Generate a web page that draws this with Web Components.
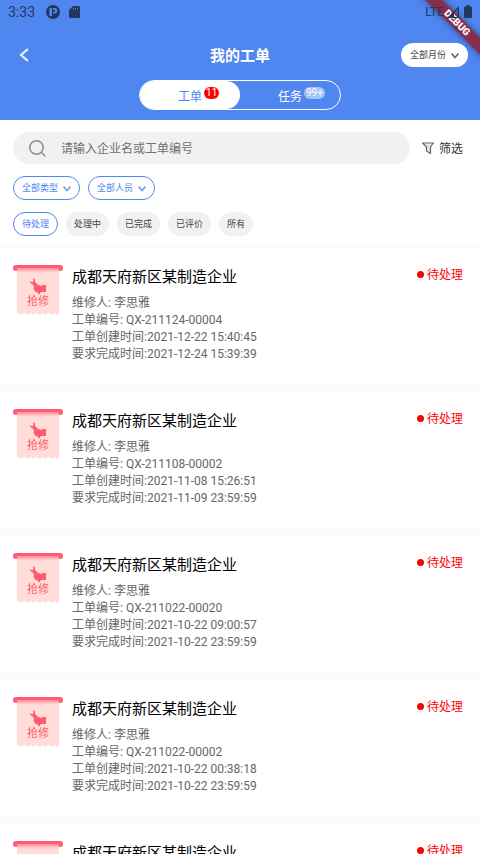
<!DOCTYPE html>
<html lang="zh-CN">
<head>
<meta charset="utf-8">
<meta name="viewport" content="width=device-width, initial-scale=1">
<title>我的工单</title>
<style>
  html, body { height: 100%; margin: 0; }
  body {
    background: #fff;
    color: #333;
    font: 12px/17px Roboto, "Noto Sans CJK SC", sans-serif;
    overflow: hidden;
    --blue: #5086f0;
  }
</style>
</head>
<body>
<orders-app></orders-app>

<script>
  function define(name, html, setup) {
    const template = document.createElement('template');
    template.innerHTML = html;
    customElements.define(name, class extends HTMLElement {
      connectedCallback() {
        if (this.shadowRoot) return;
        this.attachShadow({ mode: 'open' }).append(template.content.cloneNode(true));
        if (setup) setup(this, this.shadowRoot);
      }
    });
  }

  define('status-bar', `
    <style>
      :host { display: flex; position: relative; z-index: 2; align-items: center; height: 24px; padding: 0 8px; color: #233764; font-size: 14px; }
      .time { margin-right: 11px; }
      svg { display: block; fill: currentColor; }
      .sd { margin-left: 9px; }
      .net { margin-left: auto; font-size: 12px; }
      .signal { margin-left: 3px; }
      .battery { margin-left: 5px; }
    </style>
    <span class="time">3:33</span>
    <svg width="14" height="14" viewBox="0 0 14 14"><path fill-rule="evenodd" d="M7 0a7 7 0 1 1 0 14A7 7 0 0 1 7 0ZM3.500 3v8h2.500V3Zm3.500 0v2h2v2H7v1.500h1.500a2.750 2.750 0 0 0 0-5.500Z"/></svg>
    <svg class="sd" width="11" height="14" viewBox="0 0 11 14"><path fill-rule="evenodd" d="M4 1h6q1 0 1 1v10q0 1-1 1H1q-1 0-1-1V5Z"/><path d="M4.500 3v1.500M6.500 3v1.500M8.500 3v1.500" stroke="#5f7db8" stroke-width="1"/></svg>
    <span class="net">LTE</span>
    <svg class="signal" width="12" height="12" viewBox="0 0 12 12"><path fill-rule="evenodd" d="M0 12 12 0v12ZM7 7v4h3.500V3.500Z"/></svg>
    <svg class="battery" width="8" height="14" viewBox="0 0 8 14"><path d="M2.500 0h3v1.500H7q1 0 1 1V12q0 1-1 1H1q-1 0-1-1V2.500q0-1 1-1h1.500Z"/></svg>
  `);

  define('debug-banner', `
    <style>
      :host { position: absolute; top: 0; right: 0; width: 80px; height: 80px; overflow: hidden; pointer-events: none; }
      div {
        position: absolute; top: 17px; right: -37px; width: 120px; height: 12px;
        background: rgba(150, 24, 36, .8); color: #fff; text-align: center;
        font: 900 10px/12px Roboto, sans-serif; transform: rotate(45deg);
        box-shadow: 0 0 6px rgba(0, 0, 0, .5);
      }
    </style>
    <div>DEBUG</div>
  `);

  define('count-tab', `
    <style>
      :host { display: block; flex: 1; }
      button {
        display: block; width: 100%; height: 100%; padding: 4px 0 0; border: 0; border-radius: 14px;
        background: none; color: #fff; font: inherit;
      }
      :host([selected]) button { background: #fff; color: var(--blue); }
      .label { position: relative; }
      .count {
        position: absolute; left: 100%; top: -3px; margin-left: 2px; padding: 0 2px;
        border-radius: 6px; background: #a7c2f7; color: #fff; font-size: 10px; line-height: 12px;
      }
      :host([selected]) .count { background: #f00; }
    </style>
    <button type="button" role="tab"><span class="label"><slot></slot><span class="count"></span></span></button>
  `, (host, root) => {
    root.querySelector('.count').textContent = host.getAttribute('count');
    root.querySelector('button').setAttribute('aria-selected', host.hasAttribute('selected'));
  });

  define('filter-chip', `
    <style>
      :host { display: block; }
      button {
        display: flex; align-items: center; justify-content: center; gap: 5px; height: 24px; padding: 1px 8px 0;
        border: 0; border-radius: 12px; background: #f1f1f1; color: #444; font: inherit; font-size: 9px;
        white-space: nowrap;
      }
      :host([outlined]) button { border: 1px solid var(--blue); background: #fff; color: var(--blue); }
      :host([plain]) button { background: #fff; padding: 1px 9px 0; }
      svg { display: none; fill: none; stroke: currentColor; stroke-width: 1.600; opacity: .8; }
      :host([menu]) svg { display: block; }
    </style>
    <button type="button"><slot></slot><svg width="8" height="6" viewBox="0 0 8 6"><path d="m0.500 0.500 3.500 4 3.500-4"/></svg></button>
  `);

  define('page-header', `
    <style>
      :host { display: block; position: relative; flex: none; background: var(--blue); color: #fff; padding-bottom: 10px; }
      .bar { display: grid; grid-template-columns: 1fr auto 1fr; align-items: center; height: 50px; padding: 6px 12px 0; }
      .back { justify-self: start; display: flex; align-items: center; justify-content: center; width: 24px; height: 24px; padding: 0; border: 0; background: none; color: inherit; }
      .back svg { fill: none; stroke: currentColor; stroke-width: 2.200; opacity: .9; }
      h1 { margin: 0; padding-top: 2px; font-size: 15px; line-height: 22px; font-weight: 700; }
      filter-chip { justify-self: end; }
      .tabs { display: flex; box-sizing: border-box; width: 42%; min-width: 200px; height: 30px; margin: 0 auto; border: 1px solid #fff; border-radius: 15px; }
    </style>
    <status-bar></status-bar>
    <div class="bar">
      <button class="back" type="button" aria-label="返回"><svg width="10" height="14" viewBox="0 0 10 14"><path d="M9 1 2 7l7 6"/></svg></button>
      <h1>我的工单</h1>
      <filter-chip plain menu>全部月份</filter-chip>
    </div>
    <div class="tabs" role="tablist">
      <count-tab count="11" selected>工单</count-tab>
      <count-tab count="99+">任务</count-tab>
    </div>
    <debug-banner></debug-banner>
  `);

  define('search-row', `
    <style>
      :host { display: flex; align-items: center; gap: 12px; }
      label { flex: 1; display: flex; align-items: center; gap: 15px; height: 32px; padding: 0 16px; border-radius: 16px; background: #f1f1f1; }
      label svg { flex: none; fill: none; stroke: #8c8c8c; stroke-width: 1.500; }
      input { flex: 1; min-width: 0; padding: 2px 0 0; border: 0; outline: 0; background: none; color: #333; font: inherit; }
      input::placeholder { color: #707070; opacity: 1; }
      button { display: flex; align-items: center; gap: 5px; padding: 0 4px 0 0; border: 0; background: none; color: #333; font: inherit; }
      button span { padding-top: 3px; }
    </style>
    <label>
      <svg width="17" height="17" viewBox="0 0 17 17"><circle cx="7.500" cy="7.500" r="6.700"/><path d="m12.300 12.300 4 4"/></svg>
      <input type="text" placeholder="请输入企业名或工单编号" aria-label="搜索工单">
    </label>
    <button type="button">
      <svg width="12" height="12" viewBox="0 0 12 12" fill="none"><path d="M1 1.500h10L8.500 5v6L4.500 8.500V5Z" fill="#e4e4e4"/><path d="M0 1h12M1 1.500 4.500 5v4l4 2.500V5L11 1.500" stroke="#666" stroke-width="1.200"/></svg>
      <span>筛选</span>
    </button>
  `);

  define('filter-panel', `
    <style>
      :host { display: flex; flex-direction: column; gap: 12px; flex: none; padding: 12px 13px 10px; border-bottom: 1px solid #f7f7f7; }
      .row { display: flex; gap: 8px; }
    </style>
    <search-row></search-row>
    <div class="row">
      <filter-chip outlined menu>全部类型</filter-chip>
      <filter-chip outlined menu>全部人员</filter-chip>
    </div>
    <div class="row">
      <filter-chip outlined>待处理</filter-chip>
      <filter-chip>处理中</filter-chip>
      <filter-chip>已完成</filter-chip>
      <filter-chip>已评价</filter-chip>
      <filter-chip>所有</filter-chip>
    </div>
  `);

  define('repair-ticket', `
    <style>
      :host { display: grid; width: 50px; color: #ff5a6e; }
      svg, span { grid-area: 1 / 1; }
      svg { display: block; }
      span { align-self: end; text-align: center; font-size: 11px; line-height: 16px; padding-bottom: 5px; }
    </style>
    <svg width="50" height="50" viewBox="0 0 50 50">
      <defs><linearGradient id="shade" x2="0" y2="1"><stop stop-color="#ff8d97"/><stop offset="1" stop-color="#ffded9"/></linearGradient></defs>
      <rect width="50" height="6" rx="3" fill="#ff5a6e"/>
      <path fill="#ffded9" d="M4 3h42v46q-1.500 2-3 0-1.500-1.500-3 0-1.500 2-3 0-1.500-1.500-3 0-1.500 2-3 0-1.500-1.500-3 0-1.500 2-3 0-1.500-1.500-3 0-1.500 2-3 0-1.500-1.500-3 0-1.500 2-3 0-1.500-1.500-3 0-1.500 2-3 0-1.500-1.500-3 0Z"/>
      <path fill="url(#shade)" d="M4 3h42v5H4Z"/>
      <path fill="#ff5a6e" d="M20 13q2.500 1 2 4l2.500 2.500L28 21l2-1h3v7h-4l-2 .5V29h-2v-1.500l-3-1-1.500-3L21 22l-1.500-3q-2.500.5-2.500-3l2 1.500 1.500-1.500Z"/>
    </svg>
    <span>抢修</span>
  `);

  define('work-order', `
    <style>
      :host { display: block; border-bottom: 7px solid #fafafa; }
      article { display: flex; align-items: flex-start; gap: 9px; padding: 18px 17px 21px 13px; }
      .body { flex: 1; min-width: 0; padding-top: 1px; color: #666; }
      h2 { margin: 0 0 7px; color: #000; font-size: 15px; line-height: 22px; font-weight: 400; }
      p { margin: 0; }
      .state { display: flex; align-items: center; gap: 3px; color: #f00; }
      .state::before { content: ""; width: 7px; height: 7px; border-radius: 50%; background: currentColor; }
      .state span { padding-top: 2px; }
    </style>
    <article>
      <repair-ticket></repair-ticket>
      <div class="body">
        <h2><slot></slot></h2>
        <p class="person"></p>
        <p class="number"></p>
        <p class="created"></p>
        <p class="due"></p>
      </div>
      <div class="state"><span>待处理</span></div>
    </article>
  `, (host, root) => {
    const put = (name, label) => {
      root.querySelector('.' + name).textContent = label + host.getAttribute(name);
    };
    put('person', '维修人: ');
    put('number', '工单编号: ');
    put('created', '工单创建时间:');
    put('due', '要求完成时间:');
  });

  define('orders-app', `
    <style>
      :host { display: flex; flex-direction: column; height: 100vh; }
      main { flex: 1; min-height: 0; overflow-y: auto; scrollbar-width: none; }
    </style>
    <page-header></page-header>
    <filter-panel></filter-panel>
    <main>
      <work-order person="李思雅" number="QX-211124-00004" created="2021-12-22 15:40:45" due="2021-12-24 15:39:39">成都天府新区某制造企业</work-order>
      <work-order person="李思雅" number="QX-211108-00002" created="2021-11-08 15:26:51" due="2021-11-09 23:59:59">成都天府新区某制造企业</work-order>
      <work-order person="李思雅" number="QX-211022-00020" created="2021-10-22 09:00:57" due="2021-10-22 23:59:59">成都天府新区某制造企业</work-order>
      <work-order person="李思雅" number="QX-211022-00002" created="2021-10-22 00:38:18" due="2021-10-22 23:59:59">成都天府新区某制造企业</work-order>
      <work-order person="李思雅" number="QX-211022-00001" created="2021-10-22 00:30:12" due="2021-10-22 23:59:59">成都天府新区某制造企业</work-order>
    </main>
  `);
</script>
</body>
</html>
